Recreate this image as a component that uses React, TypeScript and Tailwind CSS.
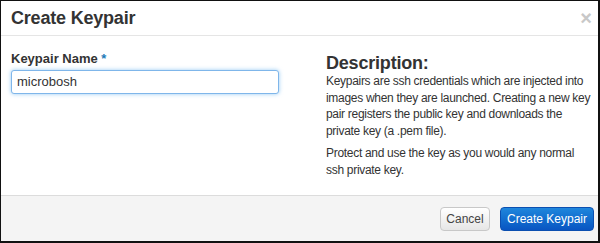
import React from "react";

export default function App() {
  return (
    <div
      className="w-[600px] h-[243px] bg-white border-t border-l border-r-2 border-b-2 border-[#111] flex flex-col text-[#333]"
      style={{ fontFamily: '"Liberation Sans", Arial, sans-serif' }}
    >
      {/* Header */}
      <div className="h-[35px] flex items-center justify-between pl-[10px] pr-[6px] border-b border-[#e5e5e5] shrink-0">
        <h3 className="text-[18px] font-bold leading-none tracking-[-0.2px]">Create Keypair</h3>
        <span className="text-[20px] font-bold leading-none text-[#c8c8c8] -mt-[1px]">×</span>
      </div>

      {/* Body */}
      <div className="flex-1 flex pl-[10px] pt-[15px] overflow-hidden">
        <div className="w-[268px] shrink-0">
          <label className="block text-[13px] font-bold leading-[16px] mb-[2px]">
            Keypair Name <span className="text-[#1e7bb8]">*</span>
          </label>
          <input
            type="text"
            defaultValue="microbosh"
            className="w-[268px] h-[24px] px-[5px] text-[13px] text-[#333] bg-white border border-[#7fb6ea] rounded-[3px] shadow-[0_0_4px_rgba(82,168,236,0.6)] outline-none"
            style={{ fontFamily: '"Liberation Sans", Arial, sans-serif' }}
          />
        </div>
        <div className="ml-[47px] flex-1 whitespace-nowrap">
          <h3 className="text-[18px] font-bold leading-[20px] tracking-[-0.2px] mt-[2px]">Description:</h3>
          <p className="text-[12px] leading-[16.6px] tracking-[-0.3px] mb-[6px]">
            Keypairs are ssh credentials which are injected into
            <br />
            images when they are launched. Creating a new key
            <br />
            pair registers the public key and downloads the
            <br />
            private key (a .pem file).
          </p>
          <p className="text-[12px] leading-[16.6px] tracking-[-0.3px]">
            Protect and use the key as you would any normal
            <br />
            ssh private key.
          </p>
        </div>
      </div>

      {/* Footer */}
      <div className="h-[46px] shrink-0 bg-[#f4f4f4] border-t border-[#dcdcdc] flex items-center justify-end gap-[10px] pr-[4px]">
        <button className="h-[24px] w-[50px] text-[12px] text-[#444] bg-gradient-to-b from-white to-[#e6e6e6] border border-[#c8c8c8] rounded-[4px]">
          Cancel
        </button>
        <button className="h-[24px] w-[94px] text-[12px] text-white bg-gradient-to-b from-[#1f86dc] to-[#0a55c2] border border-[#0b4fb0] rounded-[4px]">
          Create Keypair
        </button>
      </div>
    </div>
  );
}
